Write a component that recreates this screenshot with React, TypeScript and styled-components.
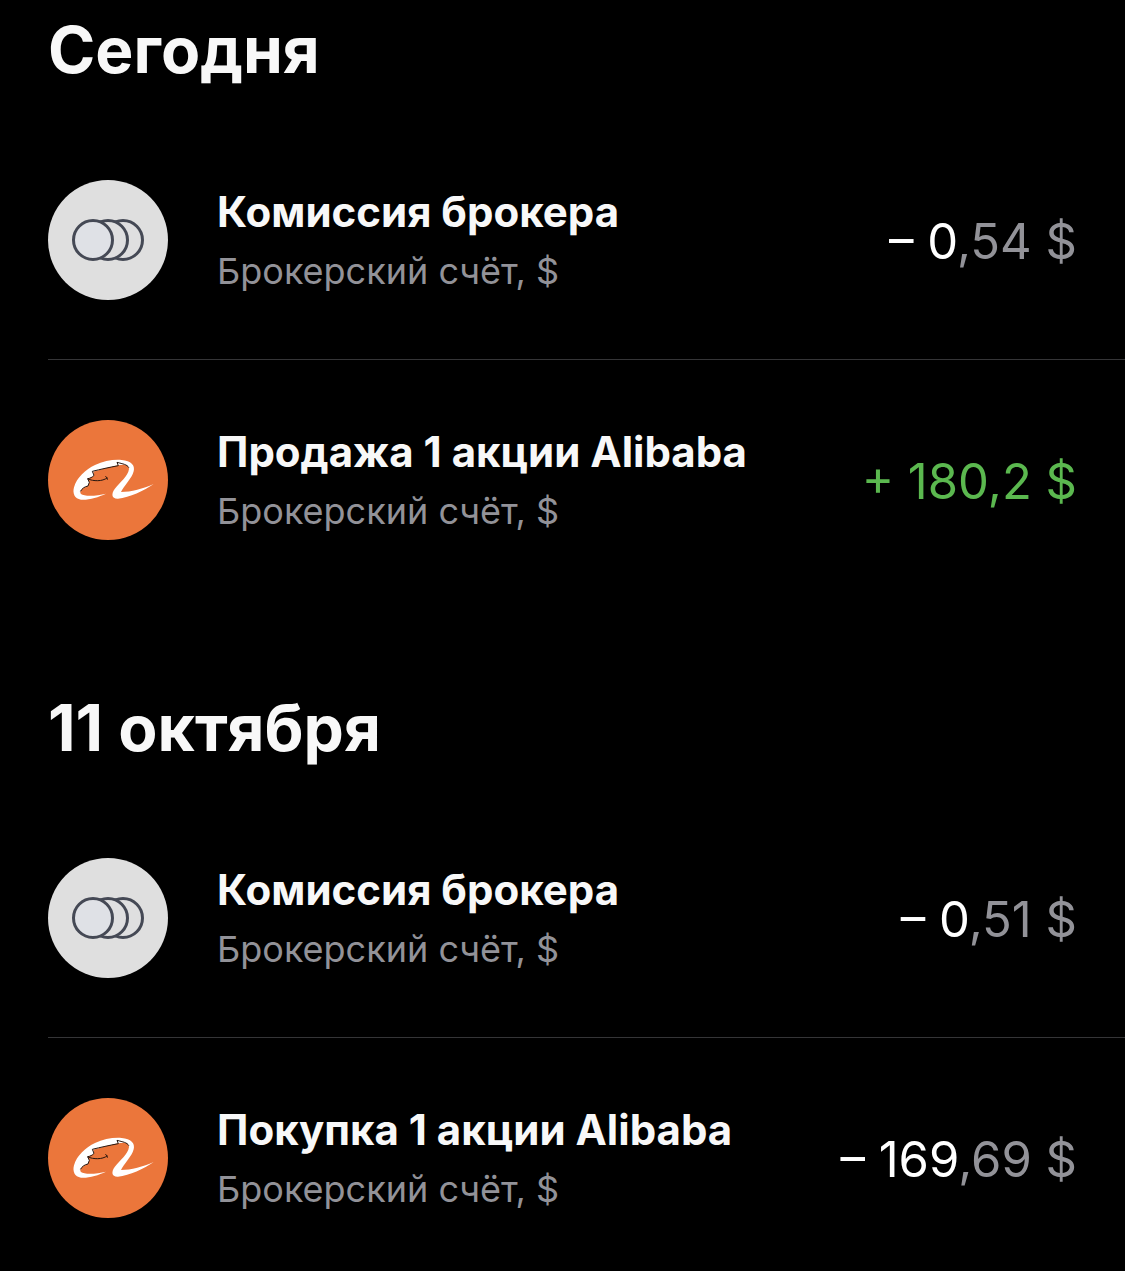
import React from "react";
import styled, { createGlobalStyle } from "styled-components";

const GlobalStyle = createGlobalStyle`
  * { box-sizing: border-box; }
  body {
    margin: 0;
    background: #000;
    color: #f8f8f8;
    font-family: Inter, "Liberation Sans", sans-serif;
  }
  h2, h3, p, ul { margin: 0; padding: 0; }
`;

const Page = styled.main`
  display: flex;
  flex-direction: column;
  gap: 88px;
  padding-top: 10px;
`;

const Day = styled.section`
  display: flex;
  flex-direction: column;
  gap: 30px;
  padding-left: 48px;
`;

const DayTitle = styled.h2`
  font-size: 64px;
  line-height: 80px;
  font-weight: 700;
`;

const Operations = styled.ul`
  list-style: none;
`;

const Operation = styled.li`
  display: flex;
  align-items: center;
  gap: 49px;
  padding: 60px 48px 60px 0;

  &:not(:last-child) {
    padding-bottom: 59px;
    border-bottom: 1px solid #353537;
  }
`;

const Icon = styled.svg`
  flex: none;
  width: 120px;
  height: 120px;
`;

const Details = styled.div`
  flex: 1;
  min-width: 0;
  padding-top: 2px;
`;

const Name = styled.h3`
  font-size: 42px;
  line-height: 60px;
  font-weight: 700;
`;

const Account = styled.p`
  font-size: 36px;
  line-height: 58px;
  color: #929298;
`;

const Amount = styled.p<{ $income?: boolean }>`
  padding-top: 4px;
  font-size: 49px;
  line-height: 60px;
  white-space: nowrap;
  color: ${(p) => (p.$income ? "#5bb84f" : "#fff")};
`;

const Cents = styled.span`
  color: #929298;
`;

function CommissionIcon() {
  return (
    <Icon viewBox="0 0 120 120" aria-hidden="true">
      <circle cx="60" cy="60" r="60" fill="#dfdfdf" />
      <g stroke="#454955" strokeWidth="3" fill="#dfdfe0">
        <circle cx="75" cy="60" r="19.5" />
        <circle cx="60" cy="60" r="19.5" />
        <circle cx="45" cy="60" r="19.5" fill="#dfe1e6" />
      </g>
    </Icon>
  );
}

function AlibabaIcon() {
  return (
    <Icon viewBox="30 30 360 360" aria-hidden="true">
      <circle cx="210" cy="210" r="180" fill="#eb763b" />
      <path
        fill="#fff"
        d="M204 251C180 262 151 271 129 269C110 267 103 250 108 232C116 203 143 178 171 165C196 153 226 148 251 150C279 152 292 166 287 184C282 205 257 229 249 246C279 246 316 236 347 222C318 243 275 262 240 266C221 267 219 252 230 237C246 216 270 200 273 177C273 165 259 161 240 166L205 174L166 185L168 197L149 207L154 217L150 228C134 232 122 245 129 252C139 260 177 258 204 251Z"
      />
      <g fill="none" stroke="#26150e" strokeWidth="3" strokeLinecap="round" strokeLinejoin="round">
        <path d="M272 172C267 163 255 162 237 157L241 167C214 172 187 178 163 184L168 196C163 202 156 205 149 206L154 217L150 228C139 230 132 236 128 243" />
        <path d="M150 207C166 214 193 215 207 204M203 200L207 203L208 208" />
      </g>
    </Icon>
  );
}

type Entry = {
  kind: "commission" | "trade";
  name: string;
  whole: string;
  cents: string;
  income?: boolean;
};

const days: { title: string; entries: Entry[] }[] = [
  {
    title: "Сегодня",
    entries: [
      { kind: "commission", name: "Комиссия брокера", whole: "– 0", cents: ",54 $" },
      { kind: "trade", name: "Продажа 1 акции Alibaba", whole: "+ 180", cents: ",2 $", income: true },
    ],
  },
  {
    title: "11 октября",
    entries: [
      { kind: "commission", name: "Комиссия брокера", whole: "– 0", cents: ",51 $" },
      { kind: "trade", name: "Покупка 1 акции Alibaba", whole: "– 169", cents: ",69 $" },
    ],
  },
];

export default function App() {
  return (
    <>
      <GlobalStyle />
      <Page>
        {days.map((day) => (
          <Day key={day.title}>
            <DayTitle>{day.title}</DayTitle>
            <Operations>
              {day.entries.map((e) => (
                <Operation key={e.name}>
                  {e.kind === "commission" ? <CommissionIcon /> : <AlibabaIcon />}
                  <Details>
                    <Name>{e.name}</Name>
                    <Account>Брокерский счёт, $</Account>
                  </Details>
                  <Amount $income={e.income}>
                    {e.whole}
                    {e.income ? e.cents : <Cents>{e.cents}</Cents>}
                  </Amount>
                </Operation>
              ))}
            </Operations>
          </Day>
        ))}
      </Page>
    </>
  );
}
